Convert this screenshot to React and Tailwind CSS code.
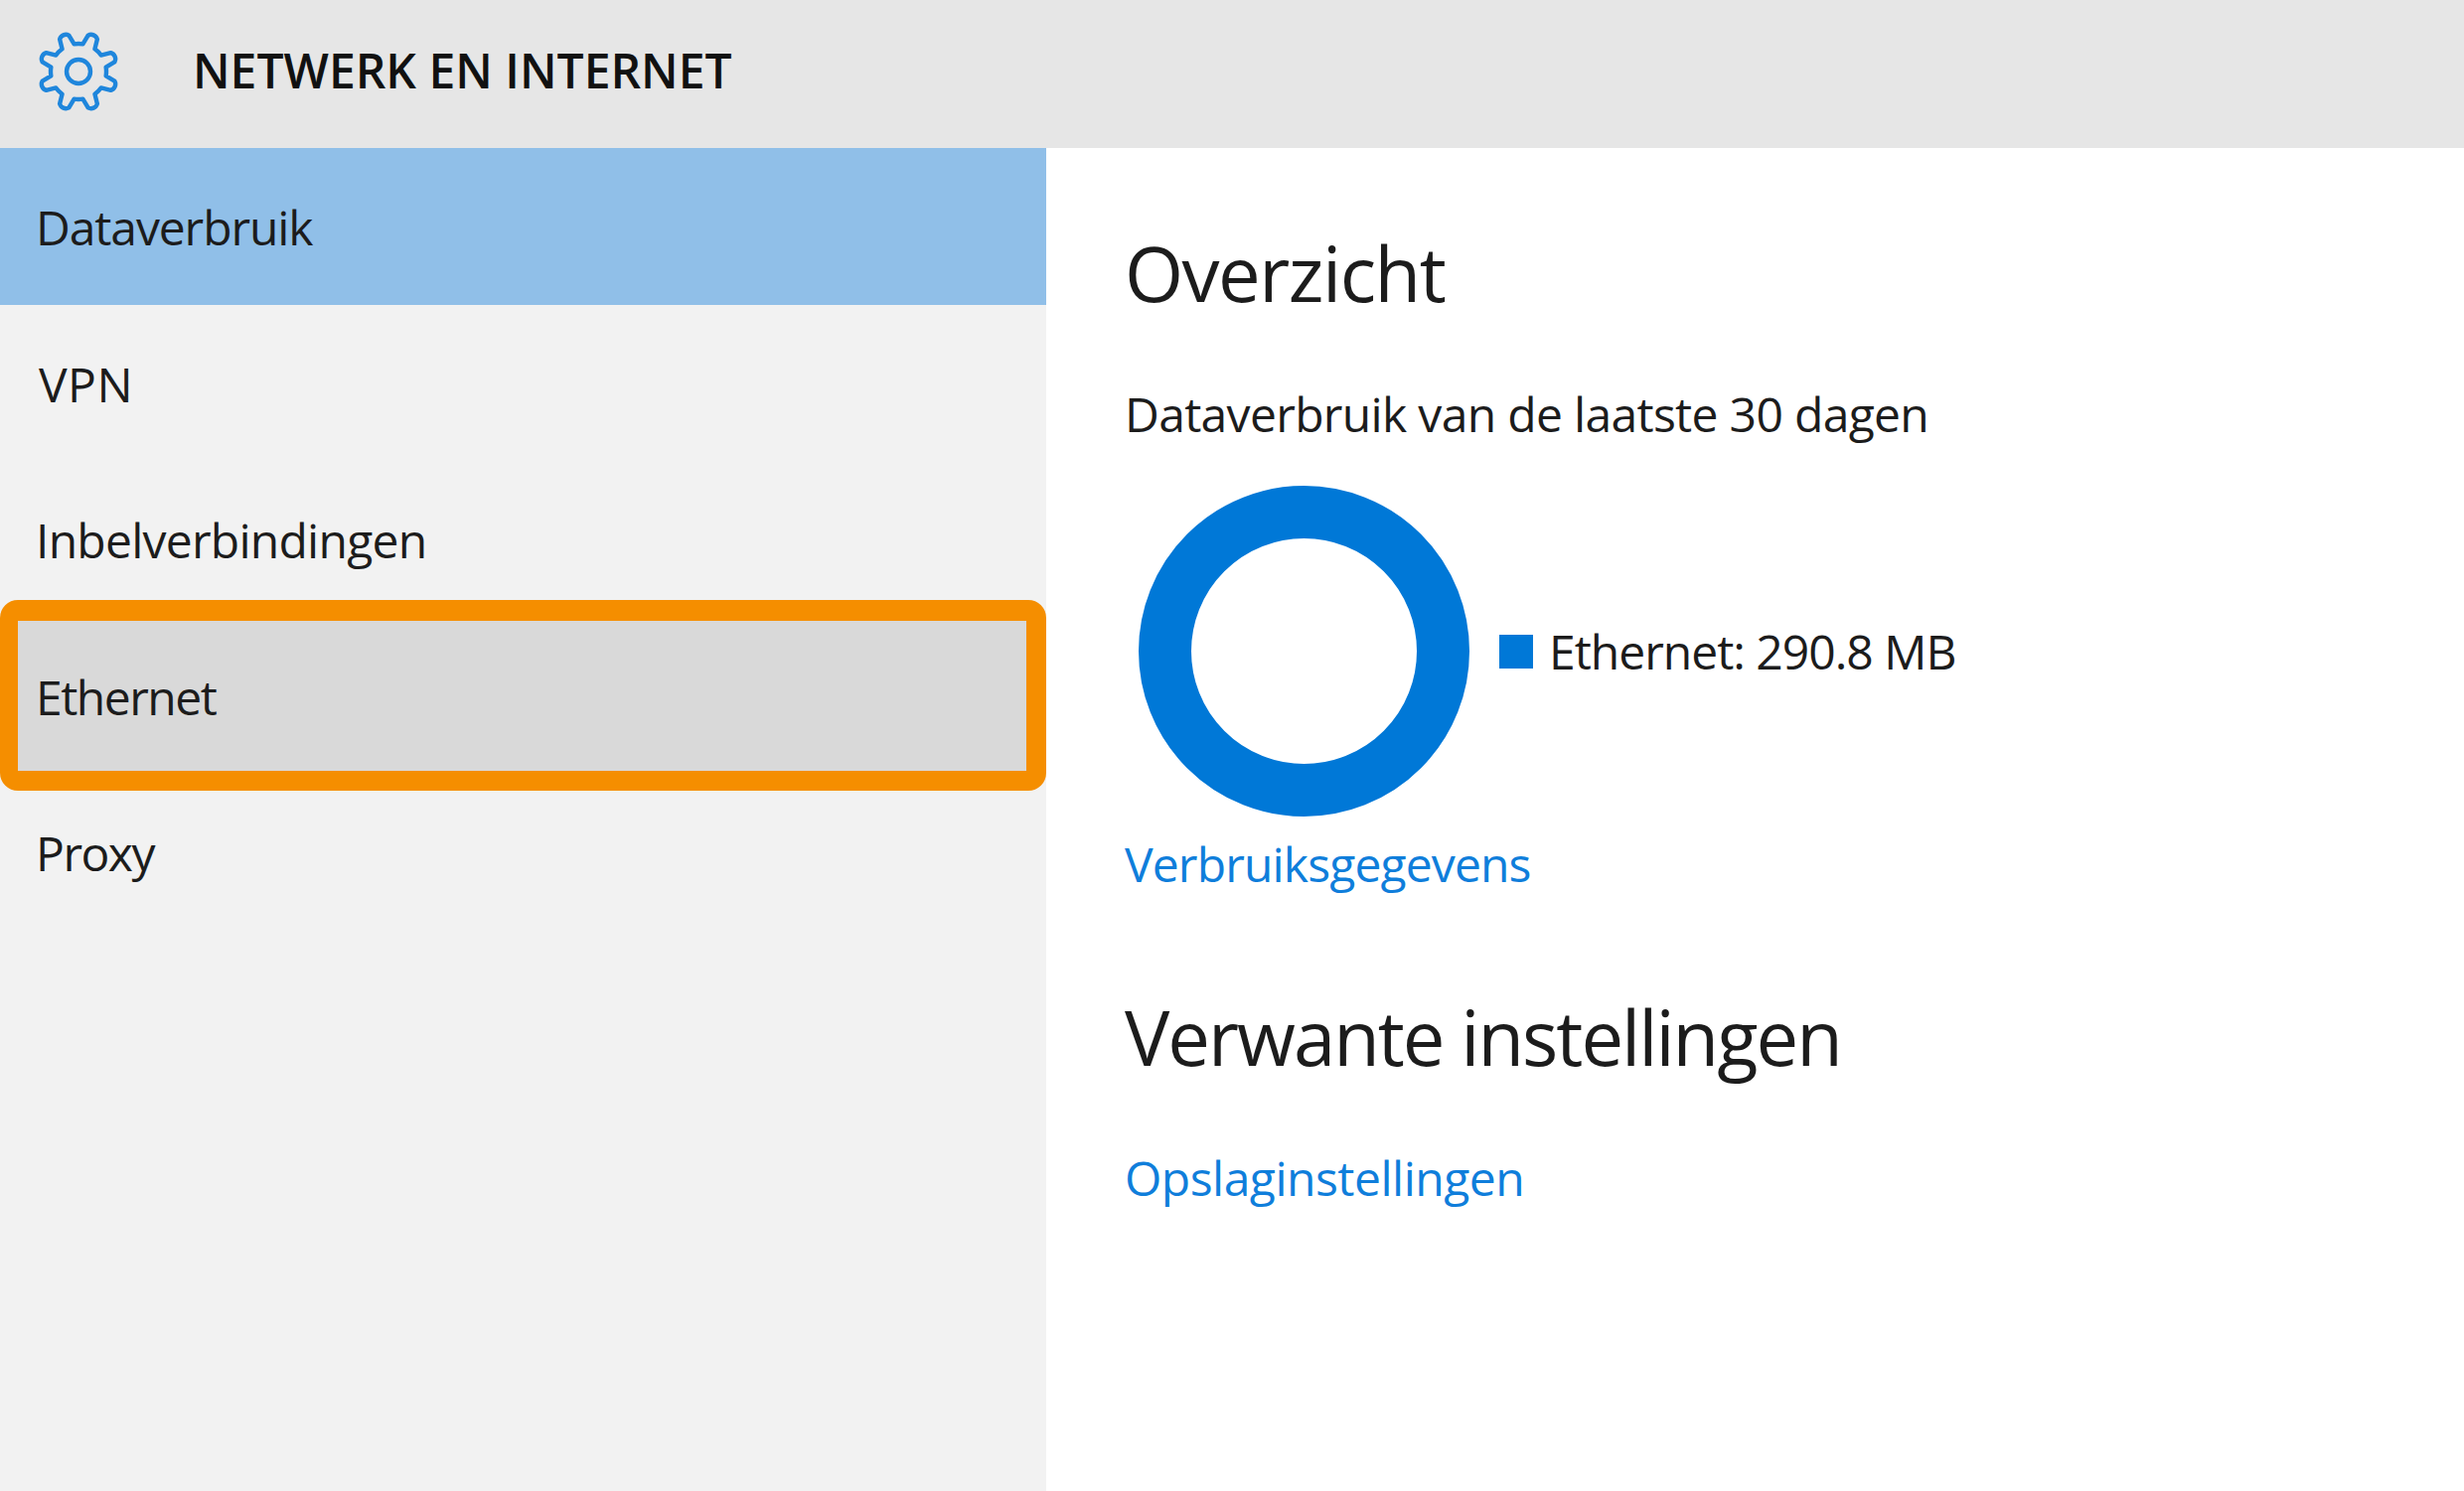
import React from "react";

const font = { fontFamily: '"Open Sans", "Noto Sans", sans-serif' };

function gearPath() {
  const cx = 50, cy = 50, teeth = 8, ro = 47, ri = 35;
  const pts = [];
  for (let i = 0; i < teeth; i++) {
    const a = ((i + 0.5) * 2 * Math.PI) / teeth - Math.PI / 2;
    const s = (2 * Math.PI) / teeth;
    const p = (r, o) => `${(cx + r * Math.cos(a + o * s)).toFixed(2)} ${(cy + r * Math.sin(a + o * s)).toFixed(2)}`;
    pts.push(`${i === 0 ? "M" : "L"}${p(ri, -0.3)} L${p(ro, -0.17)} A 8 8 0 0 1 ${p(ro, 0.17)} L${p(ri, 0.3)} A 35 35 0 0 1 ${p(ri, 0.7)}`);
  }
  return pts.join(" ") + " Z";
}

function Gear() {
  return (
    <svg viewBox="0 0 100 100" className="w-[80px] h-[82px] shrink-0 ml-[1px]" fill="none" stroke="#1f86dc" strokeWidth="5.5" strokeLinejoin="round">
      <path d={gearPath()} />
      <circle cx="50" cy="50" r="15" />
    </svg>
  );
}

function Item({ label, className = "" }) {
  return (
    <div className={`h-[157.5px] flex items-center pl-[36px] pt-[3px] text-[48px] leading-none text-[#1c1c1c] ${className}`}>
      {label}
    </div>
  );
}

export default function App() {
  return (
    <div className="w-[2480px] h-[1501px] overflow-hidden flex flex-col bg-white" style={font}>
      <header className="h-[149px] shrink-0 bg-[#e6e6e6] flex items-center pl-[38px] pb-[5px]">
        <Gear />
        <h1 className="ml-[75px] pb-[3px] text-[48px] leading-none font-semibold text-[#111]">NETWERK EN INTERNET</h1>
      </header>
      <div className="flex flex-1">
        <aside className="w-[1053px] shrink-0 bg-[#f2f2f2]">
          <Item label="Dataverbruik" className="bg-[#90bfe8] tracking-[-1.1px]" />
          <Item label="VPN" className="pl-[39px] tracking-[0.5px]" />
          <Item label="Inbelverbindingen" className="tracking-[-0.75px]" />
          <div className="relative">
            <div className="absolute left-0 right-0 -top-[17.5px] h-[192px] bg-[#d9d9d9] border-l-[18px] border-r-[20px] border-t-[21px] border-b-[20px] border-[#f58e00] rounded-[18px]" />
            <Item label="Ethernet" className="relative tracking-[-1.5px]" />
          </div>
          <Item label="Proxy" className="tracking-[-1.5px]" />
        </aside>
        <main className="flex-1 pl-[79px] pt-[76px] text-[#1c1c1c]">
          <h2 className="text-[76px] leading-[100px] tracking-[-1.5px]">Overzicht</h2>
          <p className="mt-[62px] text-[48px] leading-[60px] tracking-[-0.67px]">Dataverbruik van de laatste 30 dagen</p>
          <div className="mt-[42px] ml-[14px] flex items-center">
            <div className="w-[333px] h-[333px] rounded-full border-[53px] border-[#0078d7] shrink-0" />
            <div className="ml-[30px] w-[34px] h-[34px] bg-[#0078d7] shrink-0" />
            <span className="ml-[16px] text-[48px] leading-none tracking-[-1px]">Ethernet: 290.8 MB</span>
          </div>
          <a className="block mt-[18px] text-[48px] leading-[60px] tracking-[-0.85px] text-[#0f7edb]">Verbruiksgegevens</a>
          <h2 className="mt-[94px] text-[76px] leading-[100px] tracking-[-2px]">Verwante instellingen</h2>
          <a className="block mt-[62px] text-[48px] leading-[60px] tracking-[-0.5px] text-[#0f7edb]">Opslaginstellingen</a>
        </main>
      </div>
    </div>
  );
}
